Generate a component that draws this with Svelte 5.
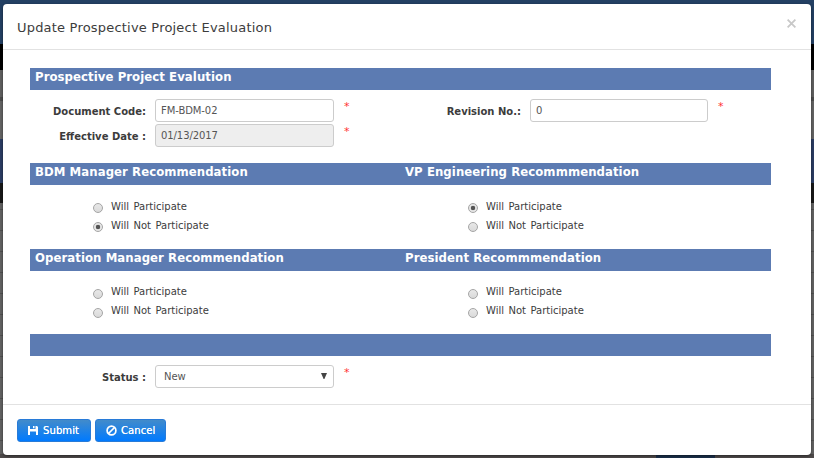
<script>
  let document_code = $state('FM-BDM-02');
  let revision = $state('0');
  const groups = [
    [
      { title: 'BDM Manager Recommendation', name: 'bdm', value: 'no' },
      { title: 'VP Engineering Recommmendation', name: 'vp', value: 'yes' }
    ],
    [
      { title: 'Operation Manager Recommendation', name: 'om', value: '' },
      { title: 'President Recommmendation', name: 'president', value: '' }
    ]
  ];
  const options = [
    ['yes', 'Will Participate'],
    ['no', 'Will Not Participate']
  ];
</script>

<div class="backdrop">
  <div class="page-row"></div>
  <div class="page-tab"></div>
  <div class="modal">
    <header>
      <h4>Update Prospective Project Evaluation</h4>
      <button class="close" aria-label="Close">
        <svg width="9" height="9" viewBox="0 0 9 9"><path d="M.6.6l7.8 7.8M8.4.6L.6 8.4" stroke="#c8c8c8" stroke-width="1.8" /></svg>
      </button>
    </header>

    <main>
      <div class="bar"><span>Prospective Project Evalution</span></div>
      <div class="fields">
        <label class="left" for="code">Document Code:</label>
        <input id="code" bind:value={document_code} />
        <i>*</i>
        <label class="right" for="rev">Revision No.:</label>
        <input id="rev" class="rev" bind:value={revision} />
        <i>*</i>
      </div>
      <div class="fields second">
        <label class="left" for="date">Effective Date :</label>
        <input id="date" value="01/13/2017" readonly />
        <i>*</i>
      </div>

      {#each groups as pair, row}
        <section class="pair" class:lower={row === 1}>
          <div class="bar">
            {#each pair as g}<span>{g.title}</span>{/each}
          </div>
          <div class="choices">
            {#each pair as g}
              <div class="choice-column">
                {#each options as [value, text]}
                  <label class="choice">
                    <input type="radio" name={g.name} {value} checked={g.value === value} />
                    <span>{text}</span>
                  </label>
                {/each}
              </div>
            {/each}
          </div>
        </section>
      {/each}

      <div class="bar status-bar"></div>
      <div class="fields">
        <label class="left" for="status">Status :</label>
        <div class="select">
          <select id="status"><option>New</option></select>
          <svg width="6" height="6" viewBox="0 0 6 6"><path d="M0 0h6L3.4 6h-.8z" fill="#444" /></svg>
        </div>
        <i>*</i>
      </div>
    </main>

    <footer>
      <button class="btn submit">
        <svg width="10" height="9" viewBox="0 0 10 9"><path fill="#fff" d="M0 0h2v3h5.5V0H9l1 1v8H8V5.5H2V9H0zM5 0h1.5v2.3H5z" /></svg>
        <span>Submit</span>
      </button>
      <button class="btn cancel">
        <svg width="11" height="11" viewBox="0 0 11 11"><g fill="none" stroke="#fff" stroke-width="1.7"><circle cx="5.5" cy="5.5" r="4.4" /><path d="M2.5 8.5l6-6" /></g></svg>
        <span>Cancel</span>
      </button>
    </footer>
  </div>
</div>

<style>
  :global(body) { overflow: hidden; }
  .backdrop, .backdrop * { box-sizing: border-box; }
  .backdrop {
    position: relative;
    width: 814px;
    height: 458px;
    padding: 4px 3px 3px;
    font-family: "DejaVu Sans", Verdana, sans-serif;
    font-size: 10px;
    color: #3c3c3c;
    background: linear-gradient(#234063 0 44px, #000 44px 70px, #606060 70px 97px, #4c4c4c 97px 101px, #646464 101px 139px, #2b3d63 139px 183px, #181818 183px 203px, transparent 203px),
      repeating-linear-gradient(#626262 0 20px, #505050 20px 21px);
  }
  .page-row { position: absolute; left: 0; right: 0; bottom: 0; height: 4px; background: #4e4a4a; }
  .page-tab { position: absolute; left: 656px; bottom: 0; width: 59px; height: 4px; background: #1b304b; }
  .modal {
    position: relative;
    display: flex;
    flex-direction: column;
    width: 808px;
    height: 451px;
    background: #fff;
    border-radius: 4px;
    box-shadow: 0 1px 3px rgba(0, 0, 0, .5);
  }
  header {
    display: flex;
    justify-content: space-between;
    align-items: flex-start;
    height: 46px;
    padding: 15px 15px 0 14px;
    border-bottom: 1px solid #e2e2e2;
  }
  h4 { margin: 0; font-size: 13px; line-height: 18px; font-weight: 400; letter-spacing: .2px; white-space: nowrap; }
  .close { display: flex; border: 0; background: none; padding: 0; }
  main { height: 354px; padding: 18px 40px 0 27px; }
  .bar {
    display: flex;
    height: 22px;
    padding-left: 5px;
    background: #5c7bb2;
    color: #fff;
    font-family: "DejaVu Sans Condensed", "DejaVu Sans", Tahoma, sans-serif;
    font-stretch: condensed;
    font-size: 13px;
    line-height: 18px;
    font-weight: 700;
    letter-spacing: .07px;
    white-space: nowrap;
  }
  .pair .bar { line-height: 17px; }
  .bar span { flex: 0 0 370px; }
  .fields { display: flex; height: 23px; margin-top: 9px; }
  .fields.second { margin-top: 2px; }
  .fields label { font-weight: 700; line-height: 25px; text-align: right; white-space: nowrap; }
  .left { width: 116px; margin-right: 9px; }
  .right { width: 172px; margin-right: 9px; }
  .fields input, select {
    width: 179px;
    height: 23px;
    padding: 0 5px;
    border: 1px solid #ccc;
    border-radius: 3px;
    background: #fff;
    color: #555;
    font: 10px "DejaVu Sans", Verdana, sans-serif;
    letter-spacing: -.08px;
  }
  .fields input.rev { width: 178px; }
  .fields input[readonly] { background: #eee; }
  i { width: 15px; padding-left: 10px; font-style: normal; font-size: 11px; line-height: 16px; color: #f33; }
  .pair { margin-top: 16px; height: 70px; }
  .lower { height: 69px; }
  .choices { display: flex; padding: 12px 0 0 63px; }
  .choice-column { flex: 0 0 375px; }
  .choice { display: flex; height: 19px; white-space: nowrap; line-height: 19px; word-spacing: 1.3px; }
  .lower .choice { line-height: 17px; }
  .choice input {
    appearance: none;
    width: 10px;
    height: 10px;
    margin: 6px 8px 0 0;
    border: 1px solid #a5a5a5;
    border-radius: 50%;
    background: linear-gradient(#e8e8e8, #dadada);
  }
  .choice input:checked { background: radial-gradient(circle, #555 0 1.9px, #e6e6e6 2.6px); }
  .status-bar { margin-top: 16px; }
  .select { position: relative; }
  select { appearance: none; padding-left: 8px; }
  .select svg { position: absolute; right: 7px; top: 8px; }
  footer { display: flex; gap: 4px; height: 51px; padding: 14px 14px 0; border-top: 1px solid #e2e2e2; }
  .btn {
    display: flex;
    align-items: center;
    height: 23px;
    padding: 0 0 0 10px;
    border: 1px solid #287bd8;
    border-radius: 3px;
    background: linear-gradient(#428bca, #007aff);
    color: #fff;
    font: 10px "DejaVu Sans", Verdana, sans-serif;
    letter-spacing: .1px;
    text-shadow: 0 0 .6px #fff;
    gap: 4px;
  }
  .submit { width: 74px; gap: 5px; }
  .cancel { width: 71px; }
</style>
